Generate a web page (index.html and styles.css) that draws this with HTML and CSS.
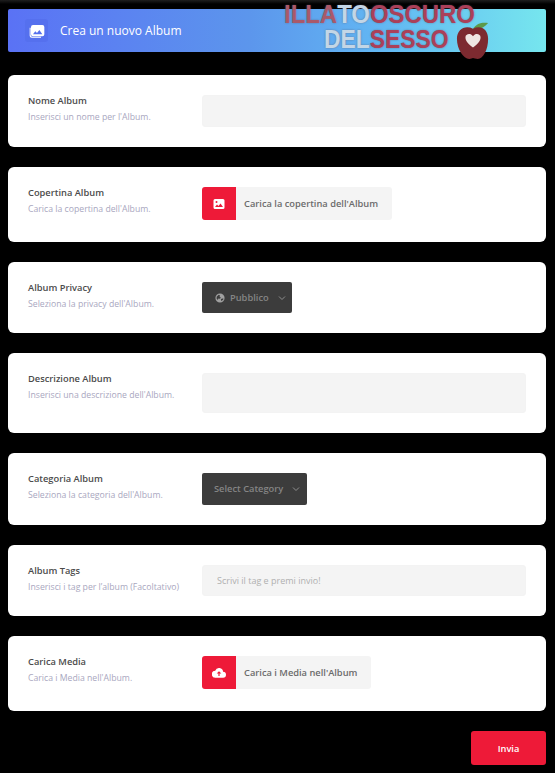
FILE: index.html
```html
<!DOCTYPE html>
<html lang="en">
  <head>
    <meta charset="UTF-8" />
    <meta name="viewport" content="width=device-width, initial-scale=1.0" />
    <title>Crea un nuovo Album</title>
    <link rel="stylesheet" href="styles.css">
  </head>
  <body>
    <div class="page-header">
      <span class="header-icon">
        <svg width="16" height="16" viewBox="0 0 24 24" fill="#fff">
          <path d="M6 3h14a3 3 0 0 1 3 3v11a3 3 0 0 1-3 3H6a3 3 0 0 1-3-3V6a3 3 0 0 1 3-3zm0 14h14l-4.500-6.500-3.500 4.500-2.500-2.500z" fill-rule="evenodd" />
          <path d="M1 7v12a3 3 0 0 0 3 3h14v-1.500H5a2.500 2.500 0 0 1-2.500-2.500V7z" />
        </svg>
      </span>
      <h1>Crea un nuovo Album</h1>
    </div>

    <div class="logo">
      <div class="logo-line"><span class="logo-dim">ILLA</span><span class="logo-light">TO</span><span class="logo-red">OSCURO</span></div>
      <div class="logo-line logo-second"><span class="logo-light">DEL</span><span class="logo-red">SESSO</span></div>
      <svg class="logo-apple" width="34" height="40" viewBox="0 0 36 42">
        <path d="M18 9 C22 3 28 2 34 3 C30 8 25 10 18 9 Z" fill="#5c9a4a" />
        <path d="M18 9 C10 5 1 9 1 20 C1 31 8 41 14 41 C16 41 17 40 18 40 C19 40 21 41 23 41 C29 41 34 31 34 20 C34 9 26 5 18 9 Z" fill="#7d2a30" />
        <path d="M18 29 C13 25 10 22 10 18 C10 15 15 13 18 17 C21 13 26 15 26 18 C26 22 23 25 18 29 Z" fill="#efe6e2" />
      </svg>
    </div>

    <div class="card">
      <div class="field-info">
        <h2>Nome Album</h2>
        <p>Inserisci un nome per l'Album.</p>
      </div>
      <input class="text-input" type="text" />
    </div>

    <div class="card">
      <div class="field-info">
        <h2>Copertina Album</h2>
        <p>Carica la copertina dell'Album.</p>
      </div>
      <div class="upload-btn">
        <span class="upload-icon">
          <svg width="12" height="12" viewBox="0 0 24 24" fill="#fff">
            <path d="M4 2h16a3 3 0 0 1 3 3v14a3 3 0 0 1-3 3H4a3 3 0 0 1-3-3V5a3 3 0 0 1 3-3zm0 16h16l-5-7-4 5-3-3zM7 6a2 2 0 1 0 0 4 2 2 0 0 0 0-4z" fill-rule="evenodd" />
          </svg>
        </span>
        <span class="upload-label">Carica la copertina dell'Album</span>
      </div>
    </div>

    <div class="card">
      <div class="field-info">
        <h2>Album Privacy</h2>
        <p>Seleziona la privacy dell'Album.</p>
      </div>
      <div class="select-btn privacy">
        <svg width="10" height="10" viewBox="0 0 24 24" fill="#a0a0a0">
          <path d="M12 1a11 11 0 1 0 0 22 11 11 0 0 0 0-22zM4 9l5-5 3 2-1 3 3 2-2 3-4-1-1 4-3-3zm11 10-1-4 3-2 4 1a9 9 0 0 1-6 5z" fill-rule="evenodd" />
        </svg>
        <span>Pubblico</span>
        <svg class="chevron" width="8" height="8" viewBox="0 0 8 8"><path d="M1 2.500 4 5.500 7 2.500" fill="none" stroke="#8f8f8f" /></svg>
      </div>
    </div>

    <div class="card">
      <div class="field-info">
        <h2>Descrizione Album</h2>
        <p>Inserisci una descrizione dell'Album.</p>
      </div>
      <textarea class="text-input text-area"></textarea>
    </div>

    <div class="card">
      <div class="field-info">
        <h2>Categoria Album</h2>
        <p>Seleziona la categoria dell'Album.</p>
      </div>
      <div class="select-btn category">
        <span>Select Category</span>
        <svg class="chevron" width="8" height="8" viewBox="0 0 8 8"><path d="M1 2.500 4 5.500 7 2.500" fill="none" stroke="#8f8f8f" /></svg>
      </div>
    </div>

    <div class="card">
      <div class="field-info">
        <h2>Album Tags</h2>
        <p>Inserisci i tag per l’album (Facoltativo)</p>
      </div>
      <input class="text-input tags-input" type="text" placeholder="Scrivi il tag e premi invio!" />
    </div>

    <div class="card">
      <div class="field-info">
        <h2>Carica Media</h2>
        <p>Carica i Media nell'Album.</p>
      </div>
      <div class="upload-btn">
        <span class="upload-icon">
          <svg width="14" height="14" viewBox="0 0 24 24" fill="#fff">
            <path d="M19 10a7 7 0 0 0-13.500-2A6 6 0 0 0 6 20h13a5 5 0 0 0 0-10zm-6 7h-2v-4H8l4-4 4 4h-3z" fill-rule="evenodd" />
          </svg>
        </span>
        <span class="upload-label">Carica i Media nell'Album</span>
      </div>
    </div>

    <div class="actions">
      <button class="submit-btn">Invia</button>
    </div>
  </body>
</html>
```

FILE: styles.css
```css
body {
  font-family: "Open Sans", Arial, sans-serif;
  background: linear-gradient(#1e1e1e, #000 4px) no-repeat #000;
  margin: 0;
  padding: 9px 9px 0 8px;
  position: relative;
}

.page-header {
  display: flex;
  align-items: center;
  height: 43px;
  padding-left: 17px;
  margin-bottom: 23px;
  border-radius: 2px;
  background: linear-gradient(90deg, #5a72f5 0%, #5c96ec 45%, #62b8f3 70%, #76e6ee 100%);
}

.header-icon {
  display: flex;
  align-items: center;
  justify-content: center;
  width: 23px;
  height: 23px;
  border-radius: 3px;
  background-color: #5570ee;
}

.page-header h1 {
  margin: 0 0 0 12px;
  font-size: 12px;
  font-weight: 400;
  color: #fff;
}

.logo {
  position: absolute;
  top: 2px;
  left: 284px;
  width: 210px;
  height: 58px;
  font-size: 26px;
  font-weight: 700;
  line-height: 25px;
  text-shadow: 0 0 2px rgba(90, 90, 110, 0.7);
}

.logo-line {
  white-space: nowrap;
  font-family: "Liberation Sans", Arial, sans-serif;
  transform: scaleX(0.92);
  transform-origin: left;
}

.logo-line span {
  display: inline-block;
}

.logo-second {
  margin-left: 40px;
  transform: scaleX(0.88);
}

.logo-dim {
  color: #a9596a;
}

.logo-light {
  color: #c3d6e6;
}

.logo-red {
  color: #ab4059;
}

.logo-apple {
  position: absolute;
  top: 18px;
  left: 172px;
}

.card {
  display: flex;
  align-items: flex-start;
  padding: 20px;
  margin-bottom: 20px;
  border-radius: 6px;
  background-color: #fff;
}

.field-info {
  flex: 0 0 174px;
}

.field-info h2 {
  margin: 0;
  font-size: 9.300px;
  line-height: 12px;
  font-weight: 600;
  color: #4b4b4b;
}

.field-info p {
  margin: 4px 0 0;
  font-size: 8.700px;
  line-height: 12px;
  color: #a9a7c0;
}

.text-input {
  display: block;
  flex: 1;
  box-sizing: border-box;
  height: 32px;
  margin: 0;
  padding: 0 14px;
  border: 1px solid #f3f3f3;
  border-radius: 3px;
  background-color: #f4f4f4;
  font-family: inherit;
  font-size: 9px;
  resize: none;
}

.text-area {
  height: 40px;
}

.tags-input {
  height: 31px;
}

.tags-input::placeholder {
  color: #b0b0b0;
  opacity: 1;
}

.upload-btn {
  display: flex;
  align-items: center;
  height: 33px;
  margin-bottom: 2px;
  padding-right: 14px;
  border-radius: 3px;
  background-color: #f4f4f4;
}

.upload-icon {
  display: flex;
  align-items: center;
  justify-content: center;
  width: 34px;
  height: 33px;
  margin-right: 8px;
  border-radius: 3px 0 0 3px;
  background-color: #ee1a38;
}

.upload-label {
  font-size: 9.300px;
  font-weight: 600;
  color: #6b6b6b;
}

.select-btn {
  display: flex;
  align-items: center;
  box-sizing: border-box;
  border-radius: 2px;
  background-color: #3c3c3c;
  font-size: 9.300px;
  font-weight: 600;
  color: #858585;
}

.privacy {
  width: 90px;
  height: 31px;
  padding-left: 13px;
}

.privacy span {
  margin-left: 5px;
}

.category {
  width: 105px;
  height: 32px;
  padding-left: 12px;
  padding-bottom: 1px;
}

.chevron {
  margin-left: 9px;
}

.actions {
  display: flex;
  justify-content: flex-end;
}

.submit-btn {
  width: 75px;
  height: 34px;
  border: none;
  border-radius: 3px;
  background-color: #ee1a38;
  font-family: inherit;
  font-size: 9.300px;
  font-weight: 600;
  color: #fff;
  cursor: pointer;
}
```
